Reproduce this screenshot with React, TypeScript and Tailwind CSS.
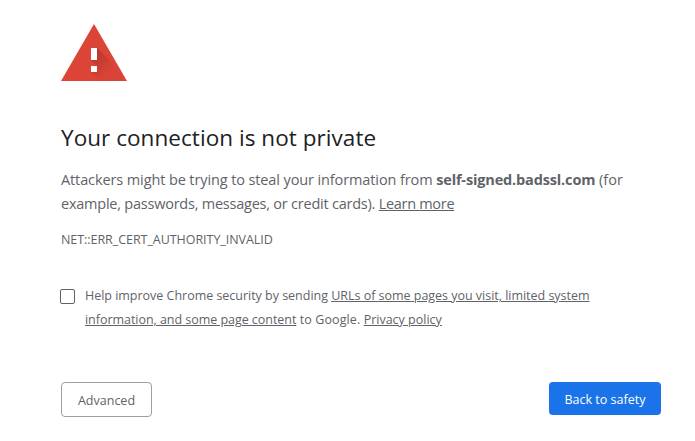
import { useState } from 'react';

function WarningIcon() {
  return (
    <svg className="block w-[66px] h-[57px]" viewBox="0 0 66 57">
      <defs>
        <linearGradient id="shade" gradientUnits="userSpaceOnUse" x1="33" y1="28" x2="49" y2="44">
          <stop offset="0" stopColor="#000" stopOpacity="0.18" />
          <stop offset="1" stopColor="#000" stopOpacity="0.02" />
        </linearGradient>
      </defs>
      <path d="M33 0L66 57H0z" fill="#db4437" />
      <path d="M36 24L54.5 42.5L63.1 57H39L30 48V42H36L30 36z" fill="url(#shade)" />
      <path d="M30 24h6v12h-6zM30 42h6v6h-6z" fill="#fff" />
    </svg>
  );
}

export default function App() {
  const [optIn, setOptIn] = useState(false);

  return (
    <div className="h-[441px] overflow-hidden bg-white pl-[61px] pr-[34px] pt-6 font-['Open_Sans','Noto_Sans',sans-serif] text-[#5f6368] whitespace-nowrap">
      <WarningIcon />

      <h1 className="mt-[42px] h-[29px] text-[22.5px] leading-[29px] tracking-[0.05px] text-[#202124]">Your connection is not private</h1>

      <p className="mt-4 text-[14.5px] leading-6">
        <span className="tracking-[-0.11px]">Attackers might be trying to steal your information from </span>
        <strong className="font-bold tracking-[-0.15px]">self-signed.badssl.com</strong>
        <span> (for</span>
        <br />
        <span className="tracking-[-0.23px]">example, passwords, messages, or credit cards). </span>
        <a href="#" className="underline tracking-[-0.3px]">Learn more</a>
      </p>

      <div className="mt-3 text-[12.5px] leading-6 tracking-[-0.05px]">NET::ERR_CERT_AUTHORITY_INVALID</div>

      {/* Reporting opt-in */}
      <label className="mt-8 -ml-px flex">
        <input
          type="checkbox"
          checked={optIn}
          onChange={(e) => setOptIn(e.target.checked)}
          className="mt-[5px] size-[15px] shrink-0 appearance-none rounded-[2px] border border-[#5f6368] bg-white checked:bg-[#1a73e8]"
        />
        <span className="ml-[10px] text-[12.5px] leading-6">
          <span className="tracking-[-0.02px]">Help improve Chrome security by sending </span>
          <a href="#" className="underline tracking-[-0.02px]">URLs of some pages you visit, limited system</a>
          <br />
          <a href="#" className="underline tracking-[-0.04px]">information, and some page content</a>
          <span className="tracking-[0.1px]"> to Google. </span>
          <a href="#" className="underline">Privacy policy</a>
        </span>
      </label>

      <div className="mt-[50px] flex items-start justify-between text-[12.5px]">
        <button className="h-[35px] w-[91px] rounded-[4px] border border-[#9aa0a6] pt-[3px] text-[#5f6368]">Advanced</button>
        <button className="h-[33px] w-[112px] rounded-[4px] bg-[#1a73e8] pt-[3px] text-white">Back to safety</button>
      </div>
    </div>
  );
}
